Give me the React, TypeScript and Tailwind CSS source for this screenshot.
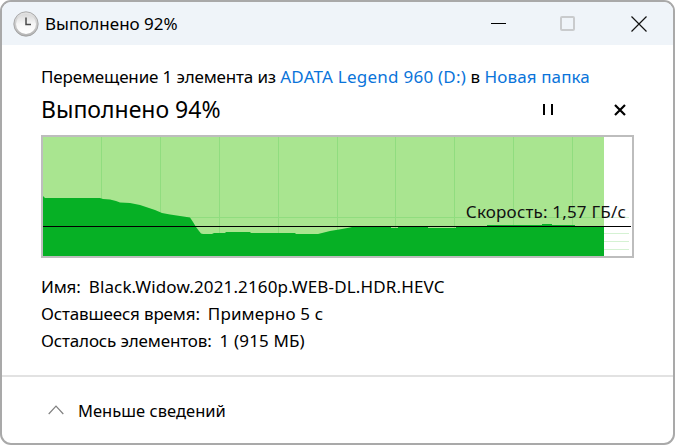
// верхняя кромка графика в координатах окна, потом сдвигаем на начало графика
const topEdge: [number, number][] = [
  [43, 196], [45, 198], [100, 198], [103, 199], [110, 199.5], [116, 201], [120, 202.5], [130, 203],
  [140, 205], [146, 207], [155, 210], [162, 213], [170, 214.5], [180, 216], [190, 217.5], [191, 219],
  [193, 222], [196, 227], [199, 231], [201, 233.5], [203, 234], [212, 234], [214, 233], [225, 233],
  [226, 232], [250, 232], [251, 233], [295, 233], [296, 234], [318, 234], [330, 231], [336, 230],
  [342, 229], [350, 227.5], [352, 227], [391, 227], [391, 228], [398, 228], [398, 227], [428, 227],
  [428, 228], [456, 228], [456, 227], [487, 227], [487, 225], [542, 225], [542, 224], [552, 224],
  [552, 225], [575, 225], [575, 227], [604, 227],
]

const chartPoints = [
  ...topEdge.map(([x, y]) => `${x - 43},${y - 137}`),
  '561,119',
  '0,119',
].join(' ')

const gridX = [58, 117, 176, 235, 294, 352, 411, 470, 529]
const paleY = [80, 96, 104, 112]

function ClockIcon() {
  return (
    <svg width="26" height="26" viewBox="0 0 26 26" className="shrink-0">
      <defs>
        <linearGradient id="ring" x1="0" y1="0" x2="0" y2="1">
          <stop offset="0" stopColor="#e4e4e4" />
          <stop offset="1" stopColor="#b4b4b4" />
        </linearGradient>
        <linearGradient id="face" x1="0" y1="0" x2="0" y2="1">
          <stop offset="0" stopColor="#d9d9d9" />
          <stop offset="0.5" stopColor="#f6f6f6" />
          <stop offset="1" stopColor="#ffffff" />
        </linearGradient>
      </defs>
      <circle cx="13" cy="13" r="12.2" fill="url(#ring)" stroke="#9a9a9a" strokeWidth="0.8" />
      <circle cx="13" cy="13" r="10" fill="url(#face)" />
      <path d="M13 6.5V13.5H18" fill="none" stroke="#4a4a4a" strokeWidth="1.5" />
    </svg>
  )
}

function Chart() {
  return (
    <div className="relative h-[123px] border-2 border-[#bdbdbd] bg-white">
      <svg width="588" height="119" viewBox="0 0 588 119" className="block" shapeRendering="crispEdges">
        <rect x="0" y="0" width="561" height="119" fill="#a9e590" />
        {gridX.map((x) => (
          <rect key={x} x={x} y="0" width="1" height="119" fill="#90dd7f" />
        ))}
        <rect x="0" y="80" width="561" height="1" fill="#90dd7f" />
        {paleY.map((y) => (
          <rect key={y} x="561" y={y} width="25" height="1" fill="#d5f2d3" />
        ))}
        <polygon points={chartPoints} fill="#06b025" shapeRendering="auto" />
        <rect x="0" y="89" width="588" height="1" fill="#000000" />
      </svg>
      <span className="absolute right-[6px] top-[63px] text-[17px] leading-[24px] tracking-[0.2px] text-[#111]">Скорость: 1,57 ГБ/с</span>
    </div>
  )
}

export default function App() {
  return (
    <div className="h-[445px] w-[675px] bg-white font-['Noto_Sans','Open_Sans',sans-serif] text-black">
      <div className="flex h-full flex-col overflow-hidden rounded-[11px] border-2 border-[#a9a9a9] bg-white">
        {/* Title bar */}
        <div className="flex h-[43px] shrink-0 items-center bg-[#eff4f9] pl-[11px]">
          <ClockIcon />
          <span className="ml-[6px] text-[17px]">Выполнено 92%</span>
          <div className="ml-auto flex h-full items-center">
            <div className="flex h-full w-[65px] items-center justify-center">
              <div className="h-[1px] w-[15px] bg-black" />
            </div>
            <div className="flex h-full w-[73px] items-center justify-center">
              <div className="h-[15px] w-[15px] rounded-[2px] border-2 border-[#c9cbcd]" />
            </div>
            <div className="flex h-full w-[69px] items-center justify-center">
              <svg width="16" height="16" viewBox="0 0 16 16">
                <path d="M0.5 0.5L15.5 15.5M15.5 0.5L0.5 15.5" stroke="#111" strokeWidth="1.2" fill="none" />
              </svg>
            </div>
          </div>
        </div>

        {/* Body */}
        <div className="flex flex-1 flex-col px-[39px] pt-[20px]">
          <p className="text-[17px] leading-[24px] whitespace-nowrap">
            <span className="tracking-[-0.15px]">Перемещение 1 элемента из </span>
            <span className="tracking-[0.24px] text-[#0a74da]">ADATA Legend 960 (D:)</span> в{' '}
            <span className="tracking-[0.1px] text-[#0a74da]">Новая папка</span>
          </p>
          <div className="mt-[4px] flex h-[33px] items-center">
            <span className="text-[23px]">Выполнено 94%</span>
            <div className="ml-auto flex items-center">
              <div className="flex gap-[6px]">
                <div className="h-[11px] w-[2px] bg-black" />
                <div className="h-[11px] w-[2px] bg-black" />
              </div>
              <svg width="12" height="12" viewBox="0 0 12 12" className="ml-[61px] mr-[8px]">
                <path d="M1 1L11 11M11 1L1 11" stroke="#000" strokeWidth="2.2" fill="none" />
              </svg>
            </div>
          </div>
          <div className="mt-[9px]">
            <Chart />
          </div>
          <div className="mt-[15px] text-[17px] leading-[27px] tracking-[-0.15px]">
            <div className="flex gap-[8px]">
              <span>Имя:</span>
              <span className="tracking-[0.14px]">Black.Widow.2021.2160p.WEB-DL.HDR.HEVC</span>
            </div>
            <div className="flex gap-[8px]">
              <span>Оставшееся время:</span>
              <span className="tracking-[0.15px]">Примерно 5 с</span>
            </div>
            <div className="flex gap-[8px]">
              <span>Осталось элементов:</span>
              <span className="tracking-[0.15px]">1 (915 МБ)</span>
            </div>
          </div>
        </div>

        {/* Footer */}
        <div className="flex h-[68px] shrink-0 items-center border-t-2 border-[#e2e2e2] pt-[3px] pl-[46px]">
          <svg width="16" height="10" viewBox="0 0 16 10" className="mb-[3px] shrink-0">
            <path d="M0.7 9L8 1.2L15.3 9" stroke="#808080" strokeWidth="1.2" fill="none" />
          </svg>
          <span className="ml-[14px] text-[16.5px] tracking-[0.03px]">Меньше сведений</span>
        </div>
      </div>
    </div>
  )
}
